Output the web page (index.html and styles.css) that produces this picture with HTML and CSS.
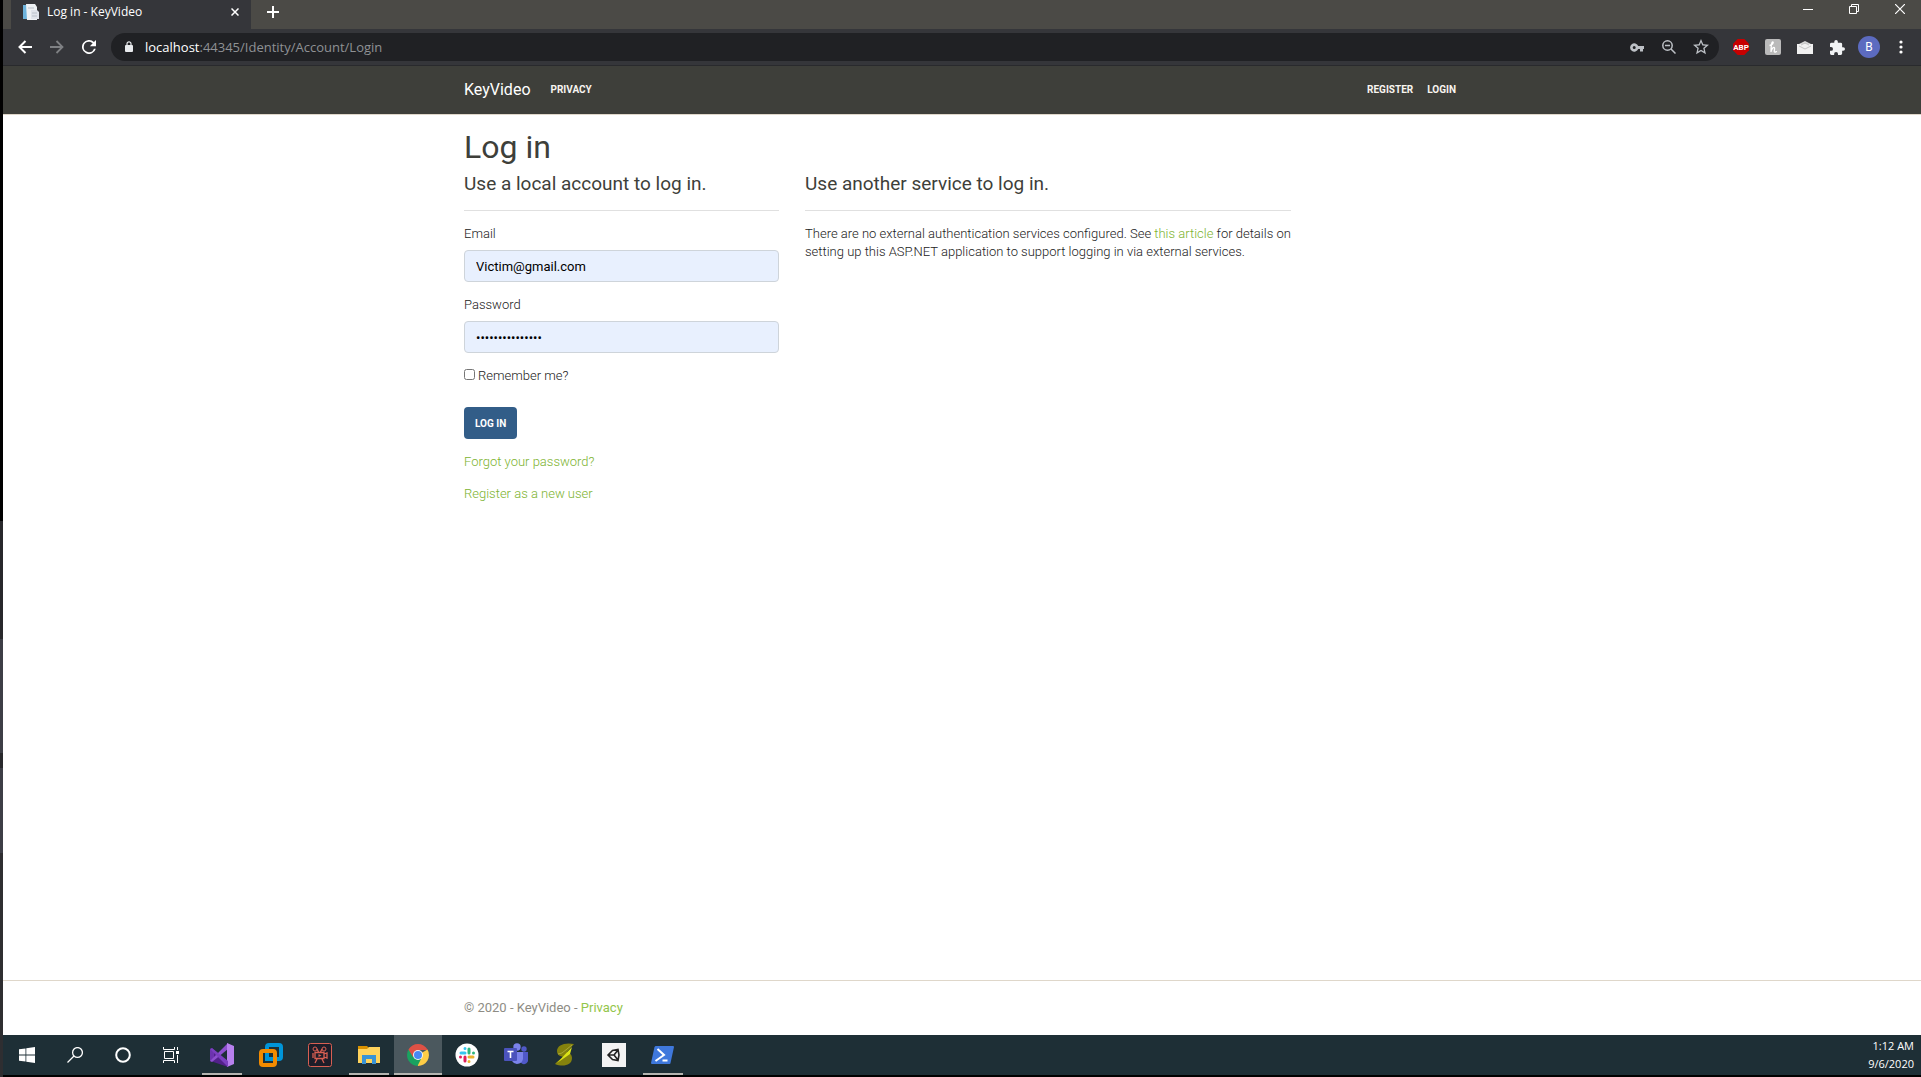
FILE: index.html
```html
<!DOCTYPE html>
<html lang="en">
<head>
    <meta charset="UTF-8">
    <meta name="viewport" content="width=device-width, initial-scale=1.0">
    <title>Log in - KeyVideo</title>
    <link rel="stylesheet" href="styles.css">
</head>
<body>
<div class="edge"></div>
<div class="screen">
    <div class="tabs">
        <div class="tab">
            <svg width="16" height="16" viewBox="0 0 16 16"><path d="M0 1h5v14H0z" fill="#6db3dc"/><path d="M3 0h9l2 3v13H4z" fill="#eef1f4"/><path d="M8 6h6l2 2v7H8z" fill="#dfe3ea"/><path d="M9 9h5M9 12h5M5 4h6" stroke="#b9c0c9"/></svg>
            <span class="tab-title">Log in - KeyVideo</span>
            <button class="icon" aria-label="Close tab"><svg width="8" height="8" viewBox="0 0 8 8"><path d="M.5.5l7 7M7.5.5l-7 7" stroke="#fff" stroke-width="1.5"/></svg></button>
        </div>
        <button class="new-tab" aria-label="New tab"><svg width="12" height="12" viewBox="0 0 12 12"><path d="M6 0v12M0 6h12" stroke="#fff" stroke-width="2"/></svg></button>
        <div class="window-buttons">
            <button aria-label="Minimize"><svg width="10" height="10" viewBox="0 0 10 10"><path d="M0 5.5h10" stroke="#fff"/></svg></button>
            <button aria-label="Restore"><svg width="10" height="10" viewBox="0 0 10 10" fill="none" stroke="#fff"><path d="M.5 2.5h7v7h-7zM2.5 2.500v-2h7v7h-2"/></svg></button>
            <button aria-label="Close"><svg width="10" height="10" viewBox="0 0 10 10"><path d="M0 0l10 10M10 0L0 10" stroke="#fff" stroke-width="1.2"/></svg></button>
        </div>
    </div>

    <div class="toolbar">
        <button class="tool" aria-label="Back"><svg width="14" height="14" viewBox="0 0 14 14" fill="none" stroke="#fff" stroke-width="2"><path d="M14 7H1.5M7.5 1l-6 6 6 6"/></svg></button>
        <button class="tool" aria-label="Forward"><svg width="14" height="14" viewBox="0 0 14 14" fill="none" stroke="#7f8184" stroke-width="1.8"><path d="M0 7h12.5M6.5 1l6 6-6 6"/></svg></button>
        <button class="tool" aria-label="Reload"><svg width="14" height="14" viewBox="4 4 16 16"><path fill="#fff" d="M17.65 6.35A8 8 0 1 0 19.73 14h-2.08A6 6 0 1 1 12 6c1.66 0 3.14.69 4.22 1.78L13 11h7V4z"/></svg></button>
        <div class="address">
            <svg class="lock" width="8" height="12" viewBox="0 0 8 12"><rect y="4" width="8" height="7" rx="1" fill="#e8eaed"/><path d="M2 5V2.800a2 2 0 0 1 4 0V5" fill="none" stroke="#e8eaed" stroke-width="1.2"/></svg>
            <span class="url"><b>localhost</b>:44345/Identity/Account/Login</span>
            <button class="tool" aria-label="Passwords"><svg width="14" height="9" viewBox="0 0 14 9"><path fill="#bdc1c6" fill-rule="evenodd" d="M8.2 3A4.2 4.2 0 1 0 8.2 6H10v2.5h3V6h1V3zM4.2 3a1.5 1.5 0 1 1 0 3 1.5 1.5 0 0 1 0-3z"/></svg></button>
            <button class="tool" aria-label="Zoom"><svg width="14" height="14" viewBox="0 0 14 14" fill="none" stroke="#bdc1c6" stroke-width="1.5"><circle cx="5.5" cy="5.5" r="4.7"/><path d="M9 9l4.5 4.5M3 5.5h5"/></svg></button>
            <button class="tool" aria-label="Bookmark"><svg width="16" height="16" viewBox="2 2 20 20"><path fill="#bdc1c6" d="M22 9.240l-7.190-.62L12 2 9.190 8.630 2 9.240l5.460 4.730L5.820 21 12 17.270 18.180 21l-1.630-7.030zM12 15.400l-3.760 2.270 1-4.280-3.320-2.880 4.380-.38L12 6.100l1.710 4.040 4.380.38-3.320 2.880 1 4.280z"/></svg></button>
        </div>
        <div class="extensions">
            <button class="tool" aria-label="Adblock Plus"><svg width="16" height="16" viewBox="0 0 16 16"><path fill="#c70000" d="M4.7 0h6.6L16 4.7v6.6L11.3 16H4.7L0 11.3V4.7z"/><text x="8" y="11" text-anchor="middle" class="abp">ABP</text></svg></button>
            <button class="tool" aria-label="Honey"><svg width="16" height="16" viewBox="0 0 16 16"><rect width="16" height="16" rx="2" fill="#bababa"/><path d="M4.5 6.500C7 6 9 4 8 3S6 5.500 6 13C6.500 9 9 7.500 9.500 9s-1 3.500 0 4 2-.5 2-1" fill="none" stroke="#fff" stroke-width="1.3"/></svg></button>
            <button class="tool" aria-label="Mail"><svg width="16" height="13" viewBox="0 0 16 13"><path d="M2 3l6-3 6 3v3H2z" fill="#d8d8d8"/><path d="M0 3h16v10H0z" fill="#f1f1f1"/><path d="M2 5l6 3 6-3M4 4l4-2 4 2" fill="none" stroke="#c4c4c4"/></svg></button>
            <button class="tool" aria-label="Extensions"><svg width="15" height="15" viewBox="2 1 21 21"><path fill="#f1f3f4" d="M20.500 11H19V7a2 2 0 0 0-2-2h-4V3.500a2.500 2.500 0 0 0-5 0V5H4a2 2 0 0 0-2 2v3.800h1.500a2.700 2.700 0 0 1 0 5.400H2V20a2 2 0 0 0 2 2h3.800v-1.500a2.700 2.700 0 0 1 5.400 0V22H17a2 2 0 0 0 2-2v-4h1.500a2.500 2.500 0 0 0 0-5z"/></svg></button>
            <button class="tool" aria-label="Profile"><span class="avatar">B</span></button>
            <button class="tool" aria-label="Menu"><svg width="4" height="14" viewBox="0 0 4 14" fill="#fff"><circle cx="2" cy="2" r="1.6"/><circle cx="2" cy="7" r="1.6"/><circle cx="2" cy="12" r="1.6"/></svg></button>
        </div>
    </div>

    <div class="page">
        <header class="navbar">
            <nav class="container nav">
                <a class="brand" href="#">KeyVideo</a>
                <a class="nav-link" href="#">Privacy</a>
                <div class="nav-right">
                    <a class="nav-link" href="#">Register</a>
                    <a class="nav-link" href="#">Login</a>
                </div>
            </nav>
        </header>

        <main class="container">
            <h1>Log in</h1>
            <div class="row">
                <section>
                    <form>
                        <h4>Use a local account to log in.</h4>
                        <hr>
                        <div class="form-group">
                            <label for="email">Email</label>
                            <input class="form-control" type="email" id="email" value="Victim@gmail.com">
                        </div>
                        <div class="form-group">
                            <label for="password">Password</label>
                            <input class="form-control" type="password" id="password" value="Password1234567">
                        </div>
                        <div class="checkbox">
                            <input type="checkbox" id="remember">
                            <label for="remember">Remember me?</label>
                        </div>
                        <button class="btn" type="button">Log in</button>
                        <p><a href="#">Forgot your password?</a></p>
                        <p><a href="#">Register as a new user</a></p>
                    </form>
                </section>
                <section>
                    <h4>Use another service to log in.</h4>
                    <hr>
                    <p>There are no external authentication services configured. See <a href="#">this article</a> for details on setting up this ASP.NET application to support logging in via external services.</p>
                </section>
            </div>
        </main>

        <footer>
            <div class="container">&copy; 2020 - KeyVideo - <a href="#">Privacy</a></div>
        </footer>
    </div>

    <div class="taskbar">
        <button class="sys" aria-label="Start"><svg width="16" height="16" viewBox="0 0 16 16" fill="#fff"><path d="M0 2.300l6.500-.9v6.200H0zM7.300 1.300L16 0v7.600H7.300zM0 8.400h6.500v6.200L0 13.700zM7.300 8.400H16V16l-8.700-1.200z"/></svg></button>
        <button class="sys" aria-label="Search"><svg width="16" height="16" viewBox="0 0 16 16" fill="none" stroke="#fff" stroke-width="1.3"><circle cx="10.5" cy="5.5" r="4.9"/><path d="M7 9L.5 15.5"/></svg></button>
        <button class="sys" aria-label="Cortana"><svg width="16" height="16" viewBox="0 0 16 16"><circle cx="8" cy="8" r="6.8" fill="none" stroke="#fff" stroke-width="2"/></svg></button>
        <button class="sys" aria-label="Task view"><svg width="16" height="16" viewBox="0 0 16 16" fill="none" stroke="#fff"><path d="M.5 0v2.500h11V0M.5 16v-2.500h11V16M1.500 4.500h9v7h-9zM14.500 0v3M14.500 8v8"/><path d="M13 4h3v3h-3z" fill="#fff" stroke="none"/></svg></button>
        <div class="apps">
            <button class="app open" aria-label="Visual Studio"><svg width="24" height="24" viewBox="0 0 24 24"><path d="M0 6l2-1 16 14v5L2 18.500 0 18z" fill="#52218a"/><path d="M0 18V6l4 3v6z" fill="#6c33af"/><path d="M0 18l18-18v6L2 19z" fill="#8e50cf"/><path d="M17 0l7 3v18l-7 3z" fill="#b780ee"/><path d="M2 5l16 13v6L0 6z" fill="#7b3fc0"/></svg></button>
            <button class="app" aria-label="VMware"><svg width="24" height="24" viewBox="0 0 24 24" fill="none" stroke-width="4"><rect x="8" y="2" width="14" height="14" rx="2" stroke="#0095d9"/><rect x="2" y="8" width="14" height="14" rx="2" stroke="#f38b00"/><path d="M8 12v4h5" stroke="#0095d9"/></svg></button>
            <button class="app" aria-label="Recorder"><svg width="24" height="24" viewBox="0 0 24 24" fill="none" stroke="#d95f52"><rect x=".5" y=".5" width="23" height="23" rx="2" fill="#1d1d29"/><circle cx="7" cy="6" r="2"/><circle cx="16" cy="6" r="2"/><path d="M9 6l1.500 3M14 6l-1.500 3M7 9.500h9v6H7zM16 11l3-1v5l-3-1M5 10v5M9 16l-2 4M14 16l2 4" stroke-width="1.3"/><path d="M10.500 11l3 1.500-3 1.500z" fill="#d95f52" stroke="none"/></svg></button>
            <button class="app open" aria-label="File Explorer"><svg width="24" height="24" viewBox="0 0 24 24"><path d="M1 3h9l2 2v3H1z" fill="#d99100"/><path d="M1 6l9 0 2-2h11v16H1z" fill="#ffd35c"/><path d="M5 21v-9h14v9h-4v-5H9v5z" fill="#3993d6"/></svg></button>
            <button class="app open active" aria-label="Chrome"><svg width="22" height="22" viewBox="0 0 22 22"><path d="M11 11l9.500-5.500A11 11 0 0 1 11 22l-1-2z" fill="#ffcd46"/><path d="M11 11l3 4-3.500 7A11 11 0 0 1 1.500 5.500z" fill="#1aa260"/><path d="M11 6h9.800l-.3-.5a11 11 0 0 0-19 0L6 13z" fill="#de5145"/><circle cx="11" cy="11" r="5" fill="#f4f4f4"/><circle cx="11" cy="11" r="4" fill="#4889f4"/></svg></button>
            <button class="app" aria-label="Slack"><svg width="24" height="24" viewBox="0 0 24 24" fill="none" stroke-width="3" stroke-linecap="round"><circle cx="12" cy="12" r="11.5" fill="#fff"/><path d="M6 10h4M10 5.500v.1" stroke="#36c5f0"/><path d="M14 6v4M18.500 10v.1" stroke="#2eb67d"/><path d="M14 14h4M14 18.500v.1" stroke="#ecb22e"/><path d="M10 14v4M5.500 14v.1" stroke="#e01e5a"/></svg></button>
            <button class="app" aria-label="Teams"><svg width="24" height="24" viewBox="0 0 24 24"><circle cx="20" cy="6" r="2.7" fill="#5059c9"/><path d="M16 9h8v7a4 4 0 0 1-8 2z" fill="#5059c9"/><circle cx="13" cy="4" r="3.7" fill="#7b83eb"/><path d="M8 9h11v7a6 6 0 0 1-11 2z" fill="#7b83eb"/><rect y="5" width="13" height="13" rx="1" fill="#4b53bc"/><path d="M3.500 8.500h6M6.500 8.500V15" stroke="#fff" stroke-width="1.6"/></svg></button>
            <button class="app" aria-label="Sublime"><svg width="20" height="24" viewBox="0 0 20 24"><path d="M19 1C10-1 2 2 2 8c0 4 3 5 6 6-2 2-6 4-8 7 7 3 17 2 17-6 0-4-3-5-5-6z" fill="#85820d"/><path d="M17 4L2 20l13-9z" fill="#dce317"/><path d="M17 2L7 10l-4 1" stroke="#aaa83a" fill="none"/></svg></button>
            <button class="app" aria-label="Unity"><svg width="24" height="24" viewBox="0 0 24 24"><path d="M0 0h24v24H0z" fill="#f3f3f3"/><path d="M6 12l4.500-4.500L16 6.500l1 5.500-1 5.500-5.500-1zM6 12h6M12 12l4-5M12 12l4 5" fill="none" stroke="#222" stroke-width="1.6"/></svg></button>
            <button class="app open" aria-label="PowerShell"><svg width="24" height="18" viewBox="0 0 24 18"><path d="M4.500 0H22a1 1 0 0 1 1 1l-3.500 16a1 1 0 0 1-1 1H1a1 1 0 0 1-1-1L3.500 1z" fill="#3f78dc"/><path d="M6.500 3l6.500 6-8.500 6M11.500 14.500h5" fill="none" stroke="#fff" stroke-width="2"/></svg></button>
        </div>
        <div class="clock">
            <div>1:12 AM</div>
            <div>9/6/2020</div>
        </div>
    </div>
</div>
</body>
</html>
```
FILE: styles.css
```css
* {
    box-sizing: border-box;
}
body {
    margin: 0;
    height: 100vh;
    display: flex;
    background: #000;
    color: #3e3f3a;
    font-family: Roboto, sans-serif;
    font-size: 13px;
    line-height: 18px;
}
button {
    border: 0;
    padding: 0;
    background: none;
    font-family: inherit;
}
svg {
    display: block;
}
a {
    color: #93c54b;
    text-decoration: none;
}

/* sliver of the window behind the browser */
.edge {
    width: 3px;
    background: linear-gradient(#000 521px, #28282b 521px 639px, #3d3e46 639px 753px, #29292c 753px 768px, #3d3e46 768px 853px, #2e2e31 853px);
}
.screen {
    flex: 1;
    min-width: 0;
    display: flex;
    flex-direction: column;
    padding-bottom: 2px;
}

/* browser */
.tabs {
    height: 29px;
    display: flex;
    background: #4b4a46;
    padding-left: 8px;
}
.tab {
    width: 240px;
    display: flex;
    align-items: center;
    padding: 0 12px 5px;
    background: #35363a;
    color: #fff;
    font-family: "Open Sans", sans-serif;
    font-size: 12px;
}
.tab-title {
    flex: 1;
    margin-left: 8px;
}
.new-tab {
    width: 44px;
    display: flex;
    justify-content: center;
    align-items: center;
    padding-bottom: 5px;
}
.window-buttons {
    display: flex;
    margin: 0 -2px 0 auto;
}
.window-buttons button {
    width: 46px;
    height: 18px;
    display: flex;
    justify-content: center;
    align-items: center;
}
.toolbar {
    height: 37px;
    display: flex;
    align-items: center;
    padding: 0 4px 0 6px;
    background: #35363a;
    border-bottom: 1px solid #292a2d;
}
.tool {
    width: 32px;
    height: 28px;
    flex: none;
    display: flex;
    justify-content: center;
    align-items: center;
}
.address {
    flex: 1;
    height: 28px;
    display: flex;
    align-items: center;
    margin: 0 6px;
    padding: 0 2px 0 14px;
    border-radius: 14px;
    background: #202124;
}
.url {
    flex: 1;
    margin-left: 12px;
    color: #8f9194;
    font-family: "Open Sans", sans-serif;
    font-size: 13px;
}
.url b {
    color: #fff;
    font-weight: 400;
}
.extensions {
    display: flex;
}
.abp {
    fill: #fff;
    font: bold 8px Roboto, sans-serif;
}
.avatar {
    width: 22px;
    height: 22px;
    border-radius: 50%;
    background: #5c6bc0;
    color: #fff;
    font-size: 12px;
    line-height: 22px;
}

/* site */
.page {
    flex: 1;
    display: flex;
    flex-direction: column;
    background: #fff;
}
.container {
    width: 100%;
    max-width: 1022px;
    margin: 0 auto;
    padding: 0 13px;
}
.navbar {
    background: #3e3f3a;
    border-bottom: 1px solid #dfd7ca;
}
.nav {
    height: 48px;
    display: flex;
    align-items: center;
}
.brand {
    margin-right: 13px;
    color: #fff;
    font-size: 16px;
}
.nav-link {
    padding: 0 7px;
    color: #f8f5f0;
    font-size: 10px;
    font-weight: 700;
    text-transform: uppercase;
}
.nav-right {
    display: flex;
    margin: 0 -3px 0 auto;
}
main {
    flex: 1;
    color: #222;
    font-weight: 300;
}
main a {
    color: #7db32f;
}
h1, h4 {
    color: #3e3f3a;
    font-weight: 400;
}
h1 {
    margin: 13px 0 7px;
    font-size: 32px;
    line-height: 38px;
}
.row {
    display: grid;
    grid-template-columns: 315fr 486fr 143fr;
    gap: 26px;
}
h4 {
    margin: 0 0 15px;
    font-size: 19px;
    line-height: 22px;
}
hr {
    margin: 0 0 14px;
    border: 0;
    border-top: 1px solid #e0e0e0;
}
.form-group {
    margin-bottom: 14px;
}
.form-group label {
    display: block;
    margin-bottom: 7px;
}
.form-control {
    display: block;
    width: 100%;
    height: 32px;
    padding: 0 11px;
    border: 1px solid #ced4da;
    border-radius: 4px;
    background: #e8f0fe;
    color: #000;
    font-family: inherit;
    font-size: 13px;
}
.checkbox {
    display: flex;
    align-items: flex-start;
    gap: 3px;
    margin-bottom: 22px;
}
.checkbox input {
    width: 11px;
    height: 11px;
    margin: 2px 0 0;
}
.btn {
    display: block;
    height: 32px;
    margin-bottom: 14px;
    padding: 0 11px;
    border-radius: 4px;
    background: #325d88;
    color: #fff;
    font-size: 10px;
    font-weight: 700;
    text-transform: uppercase;
}
p {
    margin: 0 0 14px;
}
footer {
    height: 55px;
    border-top: 1px solid #dfd7ca;
    color: #8e8c84;
    line-height: 54px;
}

/* windows taskbar */
.taskbar {
    height: 40px;
    display: flex;
    background: #1e2f36;
}
.sys {
    width: 48px;
    display: flex;
    justify-content: center;
    align-items: center;
}
.apps {
    display: flex;
    gap: 9px;
    margin-left: 7px;
}
.app {
    width: 40px;
    display: flex;
    justify-content: center;
    align-items: center;
    border-top: 2px solid transparent;
    border-bottom: 2px solid transparent;
}
.app.open {
    border-bottom-color: #b4b4b0;
}
.app.active {
    width: 48px;
    margin: 0 -4px;
    background: #4b585e;
}
.clock {
    margin-left: auto;
    padding: 2px 7px 0 0;
    color: #fff;
    font-family: "Open Sans", sans-serif;
    font-size: 11px;
    text-align: right;
}
```
